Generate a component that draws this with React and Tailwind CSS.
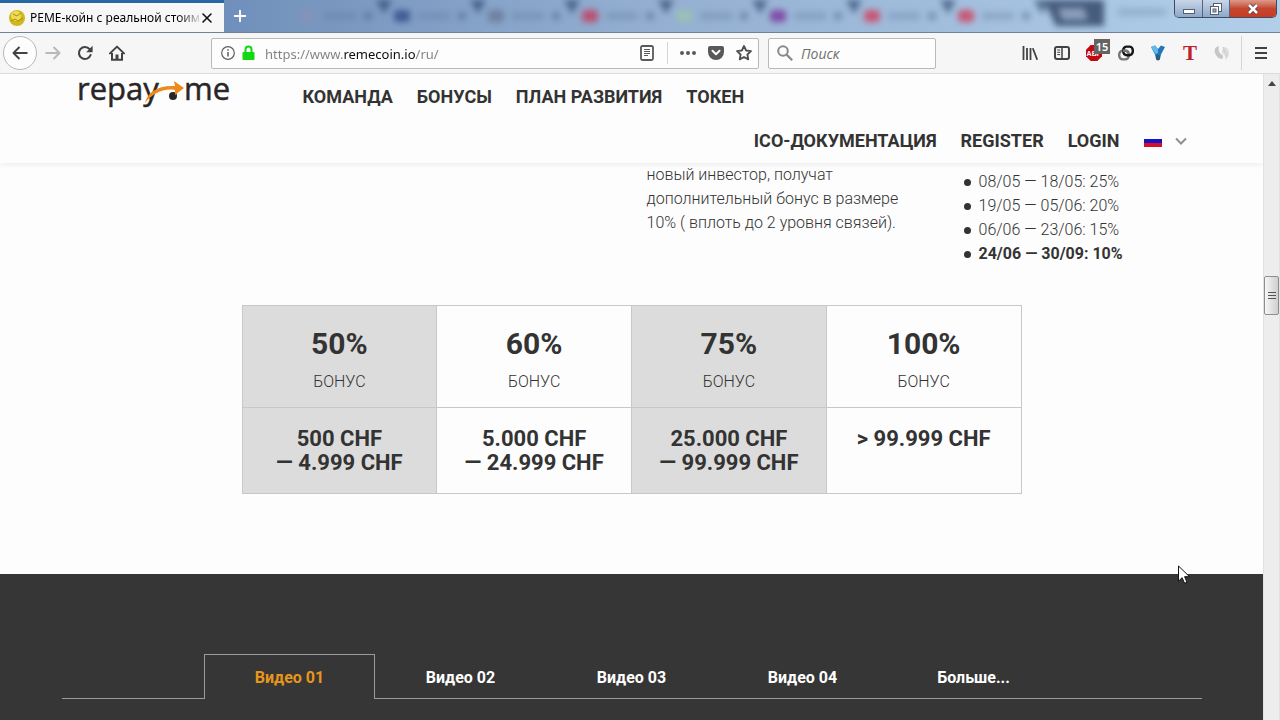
import React, { useState } from "react";
import { Plus, X } from "lucide-react";

// Tabs in the background of the window glass (out of focus)
const glassTabs = [
  { id: 1, icon: "bg-[#8793b5]" },
  { id: 2, icon: "bg-[#34508c]" },
  { id: 3, icon: "bg-[#6c7a99]" },
  { id: 4, icon: "bg-[#c0405f]" },
  { id: 5, icon: "bg-[#9cc3b4]" },
  { id: 6, icon: "bg-[#7a3b9c]" },
  { id: 7, icon: "bg-[#cf4462]" },
  { id: 8, icon: "bg-[#cf4462]" },
];

const mainLinks = ["КОМАНДА", "БОНУСЫ", "ПЛАН РАЗВИТИЯ", "ТОКЕН"];
const userLinks = ["ICO-ДОКУМЕНТАЦИЯ", "REGISTER", "LOGIN"];

const periods = [
  { label: "08/05 — 18/05: 25%" },
  { label: "19/05 — 05/06: 20%" },
  { label: "06/06 — 23/06: 15%" },
  { label: "24/06 — 30/09: 10%", current: true },
];

const bonuses = [
  { percent: "50%", range: ["500 CHF", "— 4.999 CHF"], shaded: true },
  { percent: "60%", range: ["5.000 CHF", "— 24.999 CHF"] },
  { percent: "75%", range: ["25.000 CHF", "— 99.999 CHF"], shaded: true },
  { percent: "100%", range: ["> 99.999 CHF"] },
];

const videoTabs = ["Видео 01", "Видео 02", "Видео 03", "Видео 04", "Больше..."];

function ToolButton({ label, children }) {
  return (
    <button
      type="button"
      aria-label={label}
      className="relative flex h-8 w-8 shrink-0 items-center justify-center"
    >
      {children}
    </button>
  );
}

function TitleBar() {
  return (
    <div className="relative flex h-[33px] shrink-0 overflow-hidden border-b border-[#71809b] bg-linear-to-r from-[#5d80b0] via-[#93aed0] to-[#b2cfea]">
      <div className="flex w-[224px] shrink-0 flex-col bg-[#2667a5] pt-[3px]">
        <div className="flex h-[30px] items-center bg-[#f7f7f7] pl-2">
          <svg className="h-[18px] w-[18px] shrink-0" viewBox="0 0 18 18">
            <circle cx="9" cy="9" r="8" fill="#d2b71c" />
            <circle cx="8" cy="7" r="5" fill="#ecdc55" />
            <path d="M3 12l4-2 3 2 5-3M5 5l4 2 4-3" stroke="#a98c10" fill="none" />
          </svg>
          <span className="ml-1 w-[169px] shrink-0 bg-linear-to-r from-black from-85% to-[#d0d0d0] bg-clip-text font-['Noto_Sans',sans-serif] text-[12px] leading-5 whitespace-nowrap text-transparent">
            РЕМЕ-койн с реальной стоим
          </span>
          <button type="button" aria-label="Закрыть вкладку">
            <X className="h-4 w-4 text-[#111]" strokeWidth={2.4} />
          </button>
        </div>
      </div>
      <button
        type="button"
        aria-label="Новая вкладка"
        className="flex w-8 shrink-0 items-center justify-center"
      >
        <Plus className="h-[18px] w-[18px] text-white" strokeWidth={2.5} />
      </button>
      <div className="flex min-w-0 flex-1 overflow-hidden pl-11 opacity-85 blur-[3px]" aria-hidden="true">
        {glassTabs.map((tab) => (
          <div key={tab.id} className="flex w-[94px] shrink-0 items-center">
            <div className={`h-3 w-4 shrink-0 rounded-sm ${tab.icon}`} />
            <div className="ml-2 h-2 w-8 bg-[#5d7294]/35" />
            <div className="ml-2 h-2 w-2 bg-[#3d5170]/45" />
            <svg className="mb-4 ml-1 h-4 w-4 shrink-0" viewBox="0 0 16 16">
              <path d="M0 0h16l-8 14z" fill="#263f66" opacity=".75" />
            </svg>
          </div>
        ))}
        <svg className="-ml-2 h-8 w-[62px] shrink-0" viewBox="0 0 62 32">
          <path d="M0 0h60v26H12z" fill="#354a6c" />
          <path d="M14 8h26l4 12H18z" fill="#8798b5" />
        </svg>
        <div className="mt-2 ml-3 h-2 w-12 bg-[#6b84a5]/40" />
      </div>
      <div className="absolute top-0 right-[3px] flex h-[18px] overflow-hidden rounded-b-[5px] border border-t-0 border-[#3f4b60]">
        <button
          type="button"
          aria-label="Свернуть"
          className="flex w-7 items-center justify-center border-r border-[#55657f] bg-linear-to-b from-[#c7d6e8] to-[#8ea8c8]"
        >
          <svg className="h-[14px] w-[14px]" viewBox="0 0 14 14">
            <rect x="1.5" y="7.5" width="11" height="4" fill="#fff" stroke="#545e72" />
          </svg>
        </button>
        <button
          type="button"
          aria-label="Восстановить"
          className="flex w-[27px] items-center justify-center border-r border-[#55657f] bg-linear-to-b from-[#c7d6e8] to-[#8ea8c8]"
        >
          <svg className="h-[14px] w-[14px]" viewBox="0 0 14 14">
            <rect x="4.5" y="1.5" width="8" height="8" fill="#fff" stroke="#545e72" />
            <rect x="1.5" y="4.5" width="8" height="8" fill="#fff" stroke="#545e72" />
            <rect x="4" y="7" width="3" height="3" fill="#a5b7cf" stroke="#545e72" />
          </svg>
        </button>
        <button
          type="button"
          aria-label="Закрыть"
          className="flex w-[46px] items-center justify-center bg-linear-to-b from-[#dd9a8b] via-[#c4472f] to-[#c93a26]"
        >
          <svg className="h-3 w-3" viewBox="0 0 12 12">
            <path d="M2 2l8 8M10 2l-8 8" stroke="#5b3038" strokeWidth="4" />
            <path d="M2 2l8 8M10 2l-8 8" stroke="#fff" strokeWidth="2.6" />
          </svg>
        </button>
      </div>
    </div>
  );
}

function AddressBar() {
  return (
    <div className="flex h-[31px] min-w-0 flex-1 items-center rounded-xs border border-[#b9b9b9] bg-[#fdfdfd] pl-[9px]">
      <svg className="h-[14px] w-[14px] shrink-0" viewBox="0 0 14 14" fill="none">
        <circle cx="7" cy="7" r="6.3" stroke="#5f5f5f" strokeWidth="1.2" />
        <path d="M7 6v4.5M7 3.3v1.5" stroke="#5f5f5f" strokeWidth="1.5" />
      </svg>
      <svg className="ml-[7px] h-4 w-[13px] shrink-0" viewBox="0 0 13 16">
        <path d="M3.5 8V4.5a3 3 0 0 1 6 0V8" fill="none" stroke="#12d812" strokeWidth="2" />
        <rect x="0.5" y="7" width="12" height="8" rx="1" fill="#12d812" />
      </svg>
      <input
        type="text"
        aria-label="Адрес"
        defaultValue="https://www.remecoin.io/ru/"
        className="ml-[10px] h-6 min-w-0 flex-1 bg-[linear-gradient(90deg,#808080_78px,#0c0c0c_78px,#0c0c0c_150px,#808080_150px)] bg-clip-text pt-[2px] font-['Noto_Sans',sans-serif] text-[13px] text-transparent outline-none"
      />
      <button type="button" aria-label="Режим чтения" className="mr-[13px]">
        <svg className="h-4 w-[14px]" viewBox="0 0 14 16" fill="none" stroke="#595959">
          <rect x="1" y="1" width="12" height="14" rx="1.5" strokeWidth="1.8" />
          <path d="M4 4.5h6M4 6.5h6M4 8.5h6M4 10.5h4" />
        </svg>
      </button>
      <div className="h-[22px] w-px bg-[#d5d5d5]" />
      <button type="button" aria-label="Действия" className="ml-3">
        <svg className="h-4 w-4" viewBox="0 0 16 16" fill="#595959">
          <circle cx="2" cy="8" r="2" />
          <circle cx="8" cy="8" r="2" />
          <circle cx="14" cy="8" r="2" />
        </svg>
      </button>
      <button type="button" aria-label="Pocket" className="ml-3">
        <svg className="h-4 w-4" viewBox="0 0 16 16">
          <path d="M2 1h12a2 2 0 0 1 2 2v4a8 8 0 0 1-16 0V3a2 2 0 0 1 2-2z" fill="#595959" />
          <path
            d="M4.5 5.8L8 9.2l3.5-3.4"
            fill="none"
            stroke="#fff"
            strokeWidth="2"
            strokeLinecap="round"
            strokeLinejoin="round"
          />
        </svg>
      </button>
      <button type="button" aria-label="Добавить в закладки" className="mr-[6px] ml-3">
        <svg className="h-4 w-4" viewBox="0 0 16 16">
          <path
            d="M8 1l2.1 4.5 4.9.6-3.6 3.4.9 4.9L8 12l-4.3 2.4.9-4.9L1 6.1l4.9-.6z"
            fill="none"
            stroke="#4f4f4f"
            strokeWidth="1.8"
            strokeLinejoin="round"
          />
        </svg>
      </button>
    </div>
  );
}

function Toolbar() {
  return (
    <div className="flex h-[41px] shrink-0 items-center border-b border-[#dcdcdc] bg-[#f6f6f6] px-[3px]">
      <button
        type="button"
        aria-label="Назад"
        className="flex h-[34px] w-[34px] shrink-0 items-center justify-center rounded-full border border-[#b8b8b8] bg-[#fdfdfd]"
      >
        <svg className="h-4 w-4" viewBox="0 0 16 16" fill="none" stroke="#424242" strokeWidth="2">
          <path d="M15.5 8H1.5M7.5 2L1.5 8l6 6" strokeLinejoin="round" />
        </svg>
      </button>
      <ToolButton label="Вперёд">
        <svg className="h-4 w-4" viewBox="0 0 16 16" fill="none" stroke="#b9b9b9" strokeWidth="2">
          <path d="M.5 8h14M8.5 2l6 6-6 6" strokeLinejoin="round" />
        </svg>
      </ToolButton>
      <ToolButton label="Обновить">
        <svg className="h-4 w-4" viewBox="0 0 16 16" fill="none">
          <path
            d="M12.6 4.2A6 6 0 1 0 13.6 10"
            stroke="#424242"
            strokeWidth="2.1"
            strokeLinecap="round"
          />
          <path d="M15.6.8v6.4H9.2z" fill="#424242" />
        </svg>
      </ToolButton>
      <ToolButton label="Домой">
        <svg className="h-4 w-4" viewBox="0 0 16 16" fill="none" stroke="#424242">
          <path d="M1 8.4L8 1.6l7 6.8" strokeWidth="2" strokeLinecap="round" strokeLinejoin="round" />
          <path d="M3 8v6.8h10V8" strokeWidth="2" />
          <path d="M8 15V9.5" strokeWidth="3" />
        </svg>
      </ToolButton>
      <div className="w-[78px] shrink-0" />
      <AddressBar />
      <label className="ml-[9px] flex h-[31px] w-[168px] shrink-0 items-center rounded-xs border border-[#b9b9b9] bg-[#fdfdfd] pl-2">
        <svg className="h-4 w-4 shrink-0" viewBox="0 0 16 16" fill="none" stroke="#8a8a8a">
          <circle cx="6" cy="6" r="4.8" strokeWidth="2" />
          <path d="M9.6 9.6l5.6 5.6" strokeWidth="2.2" />
        </svg>
        <input
          type="text"
          aria-label="Поиск"
          placeholder="Поиск"
          className="ml-2 w-full min-w-0 font-['Open_Sans',sans-serif] text-[14px] text-[#222] italic outline-none placeholder:text-[#6f6f6f]"
        />
      </label>
      <div className="w-[78px] shrink-0" />
      <ToolButton label="Библиотека">
        <svg className="h-4 w-4" viewBox="0 0 16 16" stroke="#424242" strokeWidth="1.8">
          <path d="M1.5 1v14M5 3v12M8.5 3v12M10.8 3.3l4.4 11.4" />
        </svg>
      </ToolButton>
      <ToolButton label="Боковая панель">
        <svg className="h-4 w-4" viewBox="0 0 16 16" fill="none" stroke="#424242">
          <rect x="1" y="2" width="14" height="12" rx="2" strokeWidth="2" />
          <path d="M8 2v12" strokeWidth="1.5" />
          <path d="M3.2 5h3M3.2 7.3h3M3.2 9.6h3" />
        </svg>
      </ToolButton>
      <ToolButton label="Adblock Plus">
        <svg className="h-4 w-4" viewBox="0 0 16 16">
          <path d="M4.7 0h6.6L16 4.7v6.6L11.3 16H4.7L0 11.3V4.7z" fill="#c1070f" />
          <text x="8" y="11" textAnchor="middle" fontSize="7" fontWeight="700" fontFamily="Liberation Sans" fill="#fff">
            ABP
          </text>
        </svg>
        <span className="absolute top-[2px] right-0 flex h-[15px] w-4 items-center justify-center bg-[#646464] font-['Noto_Sans',sans-serif] text-[11px] leading-none font-semibold text-white">
          15
        </span>
      </ToolButton>
      <ToolButton label="Ссылки">
        <svg className="h-4 w-4" viewBox="0 0 16 16" fill="none" strokeWidth="2.4">
          <rect x="1.2" y="5.8" width="9.6" height="8.6" rx="3.6" stroke="#777" />
          <rect x="5.2" y="1.6" width="9.6" height="8.6" rx="3.6" stroke="#161616" />
          <path d="M4.6 5.8h2.6a3.4 3.4 0 0 1 3.5 3" stroke="#777" />
        </svg>
      </ToolButton>
      <ToolButton label="Y">
        <svg className="h-4 w-[14px]" viewBox="0 0 14 16">
          <path d="M0 2l4-1.5L7 4l3-3.5L14 2l-4 7.5L9 14l-2 1.5L5 14l-1-4.5z" fill="#2276ba" />
          <path d="M0 2l4-1.5L7 4v4L4.5 9z" fill="#63b9ea" />
          <path d="M5 10h4v4.5L7 15.5l-2-1z" fill="#305d7c" />
        </svg>
      </ToolButton>
      <ToolButton label="T">
        <span className="font-['Liberation_Serif',serif] text-[21px] leading-none font-bold text-[#c0202a]">
          T
        </span>
      </ToolButton>
      <ToolButton label="S">
        <svg className="h-[14px] w-4" viewBox="0 0 16 14">
          <path d="M5 0C1 1 0 4 1 7s4 6 7 6c2-2 1-4-1-5S4 3 5 0z" fill="#c6c6c6" />
          <path d="M10 1c3 0 5 3 5 6s-2 6-4 7c1-3 0-5-2-6S8 3 10 1z" fill="#dedede" />
          <path d="M9 1c2 1 0 4 2 5s2 4 1 5" fill="none" stroke="#cacaca" />
        </svg>
      </ToolButton>
      <div className="mx-[3px] h-[34px] w-px shrink-0 bg-[#d5d5d5]" />
      <ToolButton label="Меню">
        <svg className="h-3 w-3" viewBox="0 0 12 12" stroke="#424242" strokeWidth="2">
          <path d="M0 1h12M0 6h12M0 11h12" />
        </svg>
      </ToolButton>
    </div>
  );
}

function Logo() {
  return (
    <a href="#home" aria-label="repay.me" className="shrink-0">
      <svg className="h-11 w-[156px] overflow-visible" viewBox="0 0 156 44">
        <g
          fontFamily="Open Sans, sans-serif"
          fontSize="31"
          fontWeight="400"
          fill="#2a2626"
          stroke="#2a2626"
          strokeWidth="0.5"
        >
          <text x="0" y="25">repay</text>
          <text x="107" y="25">me</text>
        </g>
        <circle cx="96" cy="21" r="4" fill="#2a2626" />
        <path
          d="M68 28c2-10 12-18 30-17l-1-5 10 7-9 7v-5c-12-2-23 4-30 13z"
          fill="#ee8a1d"
        />
      </svg>
    </a>
  );
}

function SiteHeader() {
  return (
    <header className="relative z-10 bg-[#fdfdfd] pt-px shadow-[0_1px_6px_rgba(0,0,0,0.08)]">
      <div className="mx-auto max-w-[1140px] px-[15px] text-[18px] leading-[44px] font-bold text-[#333]">
        <div className="flex h-11 items-center">
          <Logo />
          <nav className="ml-[70px] flex gap-6">
            {mainLinks.map((link) => (
              <a key={link} href="#section">
                {link}
              </a>
            ))}
          </nav>
        </div>
        <nav className="flex h-11 items-center justify-end gap-6">
          {userLinks.map((link) => (
            <a key={link} href="#account">
              {link}
            </a>
          ))}
          <button type="button" aria-label="Язык" className="flex items-center gap-[13px]">
            <svg className="h-3 w-[18px]" viewBox="0 0 18 12">
              <rect width="18" height="12" fill="#fdfdfd" />
              <rect y="4" width="18" height="4" fill="#1a10c4" />
              <rect y="8" width="18" height="4" fill="#d30f2b" />
            </svg>
            <svg className="h-2 w-3" viewBox="0 0 12 8">
              <path d="M1 1.5l5 5 5-5" fill="none" stroke="#8f8f8f" strokeWidth="2" />
            </svg>
          </button>
        </nav>
      </div>
    </header>
  );
}

function BonusTable() {
  return (
    <table className="mx-auto mt-[39px] w-full max-w-[780px] table-fixed border-collapse text-center text-[#333]">
      <tbody>
        <tr className="h-[102px]">
          {bonuses.map((bonus) => (
            <td
              key={bonus.percent}
              className={`border border-[#c8c8c8] pt-[18px] align-top ${bonus.shaded ? "bg-[#dcdcdc]" : ""}`}
            >
              <p className="text-[30px] leading-10 font-bold">{bonus.percent}</p>
              <p className="mt-1 text-[16px] leading-7 font-light">БОНУС</p>
            </td>
          ))}
        </tr>
        <tr className="h-[86px]">
          {bonuses.map((bonus) => (
            <td
              key={bonus.percent}
              className={`border border-[#c8c8c8] pt-[19px] align-top text-[22px] leading-6 font-bold ${bonus.shaded ? "bg-[#dcdcdc]" : ""}`}
            >
              {bonus.range.map((line) => (
                <p key={line}>{line}</p>
              ))}
            </td>
          ))}
        </tr>
      </tbody>
    </table>
  );
}

function BonusSection() {
  return (
    <section className="bg-[#fdfdfd] pb-20">
      <div className="mx-auto flex max-w-[1140px] justify-end text-[16px] leading-6 font-light text-[#333]">
        <p className="mr-[52px] w-[265px]">
          новый инвестор, получат дополнительный бонус в размере 10% ( вплоть до
          2 уровня связей).
        </p>
        <ul className="w-[238px] pt-[7px]">
          {periods.map((period) => (
            <li
              key={period.label}
              className={`flex items-center gap-2 ${period.current ? "font-bold" : ""}`}
            >
              <span className="h-[7px] w-[7px] rounded-full bg-[#333]" />
              {period.label}
            </li>
          ))}
        </ul>
      </div>
      <BonusTable />
    </section>
  );
}

function VideoSection() {
  const [active, setActive] = useState(0);

  return (
    <section className="flex-1 bg-[#363636] pt-20">
      <div className="mx-auto flex max-w-[1140px]" role="tablist">
        <div className="flex-1 border-b border-[#9a9a9a]" />
        {videoTabs.map((tab, i) => (
          <button
            key={tab}
            type="button"
            role="tab"
            aria-selected={i === active}
            onClick={() => setActive(i)}
            className={`h-[45px] w-[171px] border-[#9a9a9a] text-[16px] font-bold ${
              i === active
                ? "border-x border-t pt-[2px] text-[#e8961a]"
                : "border-b pt-1 text-white"
            }`}
          >
            {tab}
          </button>
        ))}
        <div className="flex-1 border-b border-[#9a9a9a]" />
      </div>
    </section>
  );
}

function Scrollbar() {
  return (
    <div className="flex w-[17px] shrink-0 flex-col items-center border-x border-[#e2e2e2] bg-[#ededed]">
      <svg className="mt-[7px] h-[5px] w-2" viewBox="0 0 8 5">
        <path d="M4 0l4 5H0z" fill="#444" />
      </svg>
      <div className="mt-[190px] flex h-[39px] w-full items-center justify-center rounded-xs border border-[#8e8e8e] bg-linear-to-r from-[#f6f6f6] to-[#cfcfcf]">
        <svg className="h-2 w-2" viewBox="0 0 8 8" stroke="#555" strokeWidth="1">
          <path d="M0 .5h8M0 3.5h8M0 6.5h8" />
        </svg>
      </div>
    </div>
  );
}

export default function App() {
  return (
    <div className="relative flex h-screen flex-col overflow-hidden bg-[#fdfdfd] font-[Roboto,sans-serif]">
      <TitleBar />
      <Toolbar />
      <div className="flex min-h-0 flex-1">
        <main className="flex min-w-0 flex-1 flex-col overflow-hidden">
          <SiteHeader />
          <BonusSection />
          <VideoSection />
        </main>
        <Scrollbar />
      </div>

      {/* Mouse pointer */}
      <svg
        className="pointer-events-none absolute top-[565px] left-[1178px] z-20 h-[19px] w-3"
        viewBox="0 0 12 19"
      >
        <path
          d="M.5 1v15.2l3.6-3.5 2.5 5.6 2.4-1-2.4-5.6h4.9z"
          fill="#fff"
          stroke="#111"
        />
      </svg>
    </div>
  );
}
